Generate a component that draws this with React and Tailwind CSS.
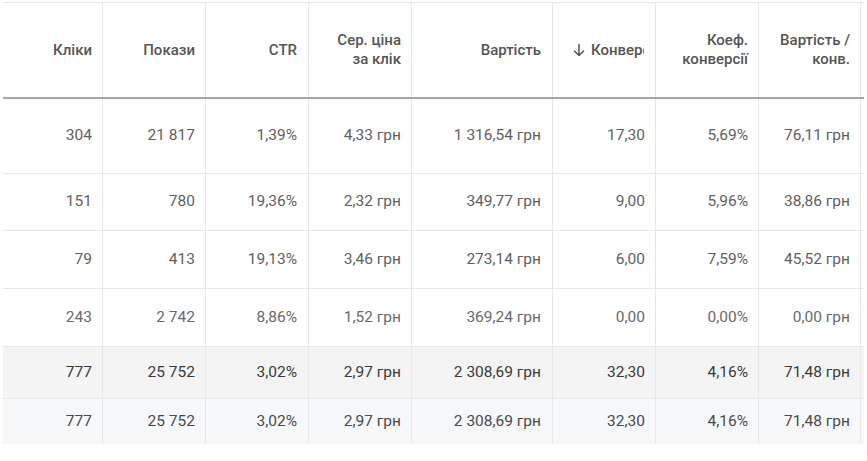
import React from "react";

const cols = "grid grid-cols-[100px_103px_103px_103px_141px_103px_103px_102px]";

const rows = [
  { h: "h-[75px]", bg: "bg-white", tc: "text-[#5f5f5f]", b: true, v: ["304", "21 817", "1,39%", "4,33 грн", "1 316,54 грн", "17,30", "5,69%", "76,11 грн"] },
  { h: "h-[57px]", bg: "bg-white", tc: "text-[#5f5f5f]", b: true, v: ["151", "780", "19,36%", "2,32 грн", "349,77 грн", "9,00", "5,96%", "38,86 грн"] },
  { h: "h-[58px]", bg: "bg-white", tc: "text-[#5f5f5f]", b: true, v: ["79", "413", "19,13%", "3,46 грн", "273,14 грн", "6,00", "7,59%", "45,52 грн"] },
  { h: "h-[58px]", bg: "bg-white", tc: "text-[#6a6a6a]", b: true, v: ["243", "2 742", "8,86%", "1,52 грн", "369,24 грн", "0,00", "0,00%", "0,00 грн"] },
  { h: "h-[52px]", bg: "bg-[#f4f4f4]", tc: "text-[#3a3a3a]", b: true, v: ["777", "25 752", "3,02%", "2,97 грн", "2 308,69 грн", "32,30", "4,16%", "71,48 грн"] },
  { h: "h-[45px]", bg: "bg-[#f7f8fa]", tc: "text-[#4a4a4a]", b: false, v: ["777", "25 752", "3,02%", "2,97 грн", "2 308,69 грн", "32,30", "4,16%", "71,48 грн"] },
];

const pr = ["pr-[10px]", "pr-[10px]", "pr-[11px]", "pr-[10px]", "pr-[11px]", "pr-[10px]", "pr-[10px]", "pr-[10px]"];

function Head({ children, i }) {
  return (
    <div className={`flex items-center justify-end text-right border-r border-[#e8e8e8] ${pr[i]}`}>
      <div className="leading-[19px]">{children}</div>
    </div>
  );
}

export default function App() {
  return (
    <div className="w-[867px] h-[461px] bg-white overflow-hidden" style={{ fontFamily: "Roboto, 'Liberation Sans', sans-serif" }}>
      <div className="pl-[3px] pt-[2px] w-[864px]">
        <div className={`${cols} h-[97px] border-t border-[#e6e6e6] border-b-2 border-b-[#a6a6a6] text-[15px] font-medium text-[#555555]`}>
          <Head i={0}>Кліки</Head>
          <Head i={1}>Покази</Head>
          <Head i={2}>CTR</Head>
          <Head i={3}>Сер. ціна<br />за клік</Head>
          <Head i={4}>Вартість</Head>
          <div className="flex items-center overflow-hidden border-r border-[#e8e8e8] pl-[19px] pr-[11px]">
            <div className="flex items-center gap-[5px] whitespace-nowrap overflow-hidden">
              <svg width="14" height="14" viewBox="0 0 14 14" fill="none" stroke="#555555" strokeWidth="1.5" strokeLinecap="round" strokeLinejoin="round" className="shrink-0">
                <path d="M7 1.5v11M2.5 8l4.5 4.5L11.5 8" />
              </svg>
              <span>Конверсії</span>
            </div>
          </div>
          <Head i={6}>Коеф.<br />конверсії</Head>
          <Head i={7}>Вартість /<br />конв.</Head>
        </div>
        {rows.map((r, ri) => (
          <div key={ri} className={`${cols} ${r.h} ${r.bg} ${r.b ? "border-b border-[#e8e8e8]" : ""} text-[15.5px] ${r.tc}`}>
            {r.v.map((val, ci) => (
              <div key={ci} className={`flex items-center justify-end border-r border-[#e8e8e8] ${pr[ci]}`}>
                {val}
              </div>
            ))}
          </div>
        ))}
      </div>
    </div>
  );
}
